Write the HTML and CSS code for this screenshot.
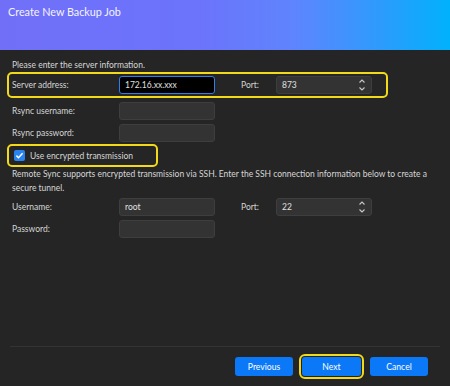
FILE: index.html
```html
<!DOCTYPE html>
<html lang="en">
<head>
  <meta charset="UTF-8">
  <title>Create New Backup Job</title>
  <meta name="viewport" content="width=device-width, initial-scale=1.0">
  <link rel="stylesheet" href="styles.css">
</head>
<body>

  <div class="dialog">
    <div class="dialog-header">Create New Backup Job</div>

    <div class="dialog-body">
      <p class="intro">Please enter the server information.</p>

      <div class="row marked wide">
        <span class="label">Server address:</span>
        <div class="field active">172.16.xx.xxx</div>
        <span class="label port-label">Port:</span>
        <div class="field spin">873
          <svg class="spinner" width="8" height="14" viewBox="0 0 8 14">
            <path d="M1.5 4.5 L4 2 L6.5 4.5" />
            <path d="M1.5 9.5 L4 12 L6.5 9.5" />
          </svg>
        </div>
      </div>

      <div class="row gap-top">
        <span class="label">Rsync username:</span>
        <div class="field"></div>
      </div>

      <div class="row">
        <span class="label">Rsync password:</span>
        <div class="field"></div>
      </div>

      <div class="row marked check-row">
        <span class="checkbox">
          <svg width="11" height="11" viewBox="0 0 11 11">
            <path d="M2.4 5.6 L4.5 7.7 L8.6 3.3" />
          </svg>
        </span>
        <span class="check-text">Use encrypted transmission</span>
      </div>

      <p class="note">Remote Sync supports encrypted transmission via SSH. Enter the SSH connection information below to create a secure tunnel.</p>

      <div class="row">
        <span class="label">Username:</span>
        <div class="field">root</div>
        <span class="label port-label">Port:</span>
        <div class="field spin">22
          <svg class="spinner" width="8" height="14" viewBox="0 0 8 14">
            <path d="M1.5 4.5 L4 2 L6.5 4.5" />
            <path d="M1.5 9.5 L4 12 L6.5 9.5" />
          </svg>
        </div>
      </div>

      <div class="row">
        <span class="label">Password:</span>
        <div class="field"></div>
      </div>
    </div>

    <div class="dialog-footer">
      <button class="btn">Previous</button>
      <button class="btn focused">Next</button>
      <button class="btn">Cancel</button>
    </div>
  </div>

</body>
</html>
```

FILE: styles.css
```css
body {
  margin: 0;
  background: #252525;
  font-family: Lato, "Open Sans", sans-serif;
  color: #d6d6d6;
}

.dialog {
  width: 450px;
  height: 386px;
  display: flex;
  flex-direction: column;
  background: #252525;
}

.dialog-header {
  height: 50px;
  box-sizing: border-box;
  padding: 5px 8px;
  font-size: 10.8px;
  color: #f4f4ff;
  background: linear-gradient(90deg, #716ff8 0%, #6b74fb 45%, #5f84fd 65%, #2c9cfc 85%, #00b1fb 100%);
}

.dialog-body {
  flex: 1;
  padding: 9px 0 0 7px;
  font-size: 8.5px;
}

.intro {
  margin: 0 0 0 5px;
  height: 13px;
  line-height: 13px;
}

.row {
  display: flex;
  align-items: center;
  height: 22px;
  box-sizing: border-box;
  padding-left: 5px;
}

.row.marked {
  border: 2px solid #f2d91a;
  border-radius: 5px;
  padding-left: 3px;
}

.row.wide {
  width: 381px;
  height: 26px;
}

.row.gap-top {
  margin-top: 2px;
}

.label {
  width: 107px;
}

.port-label {
  width: 35px;
  margin-left: 26px;
}

.field {
  width: 96px;
  height: 18px;
  box-sizing: border-box;
  padding: 0 5px;
  line-height: 16px;
  background: #333333;
  border: 1px solid #3e3e3e;
  border-radius: 3px;
  color: #e0e0e0;
}

.field.active {
  background: #000000;
  border-color: #2f7fe6;
}

.field.spin {
  display: flex;
  justify-content: space-between;
  align-items: center;
}

.spinner path {
  fill: none;
  stroke: #c8c8c8;
  stroke-width: 1.1;
}

.check-row {
  width: 151px;
  height: 23px;
  margin-top: 0;
}

.checkbox {
  width: 11px;
  height: 11px;
  margin-left: 2px;
  margin-right: 5px;
  background: #2a84f0;
  border-radius: 2px;
  display: flex;
}

.checkbox path {
  fill: none;
  stroke: #ffffff;
  stroke-width: 1.5;
}

.note {
  margin: 0 0 1px 5px;
  width: 425px;
  line-height: 14px;
}

.dialog-footer {
  display: flex;
  justify-content: flex-end;
  gap: 9px;
  margin: 0 10px;
  padding: 10px 12px 10px 0;
  border-top: 1px solid #333333;
}

.btn {
  width: 58px;
  height: 19px;
  padding: 0;
  border: none;
  border-radius: 3px;
  background: #0a78f7;
  color: #ffffff;
  font-family: Lato, "Open Sans", sans-serif;
  font-size: 8.6px;
}

.btn.focused {
  width: 59px;
  outline: 2px solid #f2d91a;
  outline-offset: 1px;
}
```
